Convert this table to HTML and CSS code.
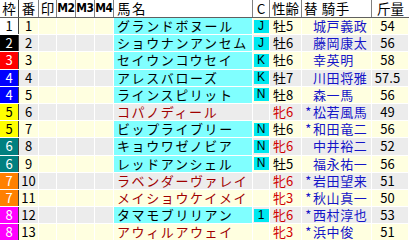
FILE: index.html
```html
<!DOCTYPE html>
<html lang="ja">
<head>
<meta charset="utf-8">
<link rel="stylesheet" href="styles.css">
</head>
<body>
<div class="grid">
  <div class="row head">
    <div class="c">枠</div><div class="c">番</div><div class="c">印</div><div class="c m">M2</div><div class="c m">M3</div><div class="c m">M4</div>
    <div class="c name">馬名</div><div class="c">C</div><div class="c">性齢</div><div class="c jock">替 騎手</div><div class="c">斤量</div>
  </div>

  <div class="row odd"><div class="c w1">1</div><div class="c">1</div><div class="c"></div><div class="c"></div><div class="c"></div><div class="c"></div><div class="c name cy">グランドボヌール</div><div class="c cc"><span class="b">J</span></div><div class="c sa">牡5</div><div class="c jock"><span class="mk"></span>城戸義政</div><div class="c kg">54</div></div>
  <div class="row even"><div class="c w2">2</div><div class="c">2</div><div class="c"></div><div class="c"></div><div class="c"></div><div class="c"></div><div class="c name cy">ショウナンアンセム</div><div class="c cc"><span class="b">J</span></div><div class="c sa">牡6</div><div class="c jock"><span class="mk"></span>藤岡康太</div><div class="c kg">56</div></div>
  <div class="row odd"><div class="c w3">3</div><div class="c">3</div><div class="c"></div><div class="c"></div><div class="c"></div><div class="c"></div><div class="c name cy">セイウンコウセイ</div><div class="c cc"><span class="b">K</span></div><div class="c sa">牡6</div><div class="c jock"><span class="mk"></span>幸英明</div><div class="c kg">58</div></div>
  <div class="row even"><div class="c w4">4</div><div class="c">4</div><div class="c"></div><div class="c"></div><div class="c"></div><div class="c"></div><div class="c name cy">アレスバローズ</div><div class="c cc"><span class="b">K</span></div><div class="c sa">牡7</div><div class="c jock"><span class="mk"></span>川田将雅</div><div class="c kg">57.5</div></div>
  <div class="row odd"><div class="c w4">4</div><div class="c">5</div><div class="c"></div><div class="c"></div><div class="c"></div><div class="c"></div><div class="c name cy">ラインスピリット</div><div class="c cc"><span class="b">N</span></div><div class="c sa">牡8</div><div class="c jock"><span class="mk"></span>森一馬</div><div class="c kg">56</div></div>
  <div class="row even"><div class="c w5">5</div><div class="c">6</div><div class="c"></div><div class="c"></div><div class="c"></div><div class="c"></div><div class="c name red">コパノディール</div><div class="c cc"></div><div class="c sa f">牝6</div><div class="c jock"><span class="mk">*</span>松若風馬</div><div class="c kg">49</div></div>
  <div class="row odd"><div class="c w5">5</div><div class="c">7</div><div class="c"></div><div class="c"></div><div class="c"></div><div class="c"></div><div class="c name cy">ビップライブリー</div><div class="c cc"><span class="b">N</span></div><div class="c sa">牡6</div><div class="c jock"><span class="mk">*</span>和田竜二</div><div class="c kg">56</div></div>
  <div class="row even"><div class="c w6">6</div><div class="c">8</div><div class="c"></div><div class="c"></div><div class="c"></div><div class="c"></div><div class="c name cy">キョウワゼノビア</div><div class="c cc"><span class="b">N</span></div><div class="c sa f">牝6</div><div class="c jock"><span class="mk"></span>中井裕二</div><div class="c kg">52</div></div>
  <div class="row odd"><div class="c w6">6</div><div class="c">9</div><div class="c"></div><div class="c"></div><div class="c"></div><div class="c"></div><div class="c name cy">レッドアンシェル</div><div class="c cc"><span class="b">N</span></div><div class="c sa">牡5</div><div class="c jock"><span class="mk"></span>福永祐一</div><div class="c kg">56</div></div>
  <div class="row even"><div class="c w7">7</div><div class="c">10</div><div class="c"></div><div class="c"></div><div class="c"></div><div class="c"></div><div class="c name red">ラベンダーヴァレイ</div><div class="c cc"></div><div class="c sa f">牝6</div><div class="c jock"><span class="mk">*</span>岩田望来</div><div class="c kg">51</div></div>
  <div class="row odd"><div class="c w7">7</div><div class="c">11</div><div class="c"></div><div class="c"></div><div class="c"></div><div class="c"></div><div class="c name red">メイショウケイメイ</div><div class="c cc"></div><div class="c sa f">牝3</div><div class="c jock"><span class="mk">*</span>秋山真一</div><div class="c kg">50</div></div>
  <div class="row even"><div class="c w8">8</div><div class="c">12</div><div class="c"></div><div class="c"></div><div class="c"></div><div class="c"></div><div class="c name cy">タマモブリリアン</div><div class="c cc"><span class="b">1</span></div><div class="c sa f">牝6</div><div class="c jock"><span class="mk">*</span>西村淳也</div><div class="c kg">53</div></div>
  <div class="row odd"><div class="c w8">8</div><div class="c">13</div><div class="c"></div><div class="c"></div><div class="c"></div><div class="c"></div><div class="c name red">アウィルアウェイ</div><div class="c cc"></div><div class="c sa f">牝3</div><div class="c jock"><span class="mk">*</span>浜中俊</div><div class="c kg">51</div></div>
</div>
</body>
</html>
```

FILE: styles.css
```css
html, body {
  margin: 0;
  padding: 0;
  background: #ffffff;
}
body {
  font-family: "Noto Sans CJK JP", "Noto Sans", sans-serif;
  font-size: 13px;
  color: #000;
}
.grid {
  display: flex;
  flex-direction: column;
  width: 409px;
}
.row {
  display: grid;
  grid-template-columns: 19px 20px 18px 19px 19px 19px 139px 17px 32px 70px 37px;
  height: 17.2px;
  border-bottom: 1px solid #ffffff;
  box-sizing: border-box;
}
.row.head {
  height: 18px;
  border-bottom: 1px solid #606060;
  font-size: 13.5px;
}
.c {
  box-sizing: border-box;
  border-right: 1px solid #ffffff;
  display: flex;
  align-items: center;
  justify-content: center;
  line-height: 14px;
  white-space: nowrap;
  min-width: 0;
}
.head .c {
  border-right: 1px solid #808080;
  background: #ffffff;
  padding-bottom: 1px;
}
.head .m {
  font-size: 12px;
  font-family: "DejaVu Sans Condensed", "DejaVu Sans", sans-serif;
  font-weight: bold;
  letter-spacing: -0.5px;
}
.head .name {
  justify-content: flex-start;
  padding-left: 17px;
}
.head .jock {
  justify-content: flex-start;
  padding-left: 2px;
}
.head .c:last-child { border-right: none; }

.odd .c { background: #ffffe0; }
.even .c { background: #ececec; }

.row .name {
  justify-content: flex-start;
  padding-left: 3px;
  letter-spacing: 1.6px;
}
.row .name.cy { background: #80ffff; }
.row .name.red { color: #a00000; }

.cc { padding: 1px 0; }
.b {
  display: block;
  width: 15px;
  height: 13px;
  background: #00e8f0;
  line-height: 13px;
  text-align: center;
  font-family: "Liberation Sans", sans-serif;
  font-size: 12px;
}
.sa { justify-content: flex-start; padding-left: 3px; }
.sa.f { color: #d00000; }
.row .jock {
  justify-content: flex-start;
  padding-left: 2px;
  color: #1414c8;
  letter-spacing: 0.6px;
}
.head.row .jock { color: #000; }
.mk {
  display: inline-block;
  width: 9px;
  text-align: center;
}
.kg { padding-right: 5px; }

.row .w1 { background: #ffffff; color: #000; }
.row .w2 { background: #000000; color: #fff; }
.row .w3 { background: #ff0000; color: #fff; }
.row .w4 { background: #0000ff; color: #fff; }
.row .w5 { background: #ffff00; color: #000; }
.row .w6 { background: #008080; color: #fff; }
.row .w7 { background: #ff8000; color: #fff; }
.row .w8 { background: #ff00ff; color: #fff; }
.row .c:first-child { border-right: 1px solid #404040; }
```
